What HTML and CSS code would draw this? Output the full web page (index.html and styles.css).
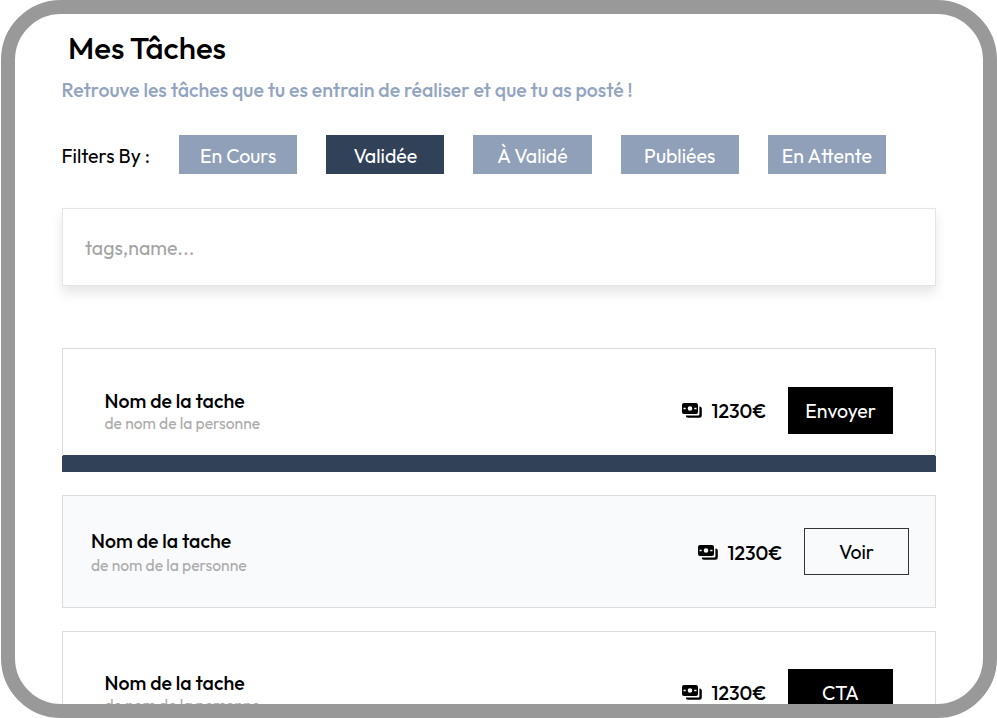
FILE: index.html
```
<!DOCTYPE html>
<html lang="fr">
<head>
<meta charset="utf-8">
<title>Mes Tâches</title>
<link rel="stylesheet" href="styles.css">
</head>
<body>
<svg class="defs" width="0" height="0" aria-hidden="true">
  <symbol id="cash" viewBox="0 0 20 15">
    <path fill-rule="evenodd" d="M2 0h12a2 2 0 0 1 2 2v7a2 2 0 0 1-2 2H2a2 2 0 0 1-2-2V2a2 2 0 0 1 2-2zM8 3.200a2.300 2.300 0 1 0 0 4.600a2.300 2.300 0 0 0 0-4.600zM1.500 4.700v1.600h2.200V4.700zM12.300 4.700v1.600h2.200V4.700z"/>
    <path d="M17.400 3.500a2.200 2.200 0 0 1 2.400 2V12.500a2.300 2.300 0 0 1-2.300 2.300H6a2.200 2.200 0 0 1-2.200-2.300H16.400a1 1 0 0 0 1-1z"/>
  </symbol>
</svg>
<main class="screen">
  <h1 class="title">Mes Tâches</h1>
  <p class="subtitle">Retrouve les tâches que tu es entrain de réaliser et que tu as posté !</p>
  <div class="filters">
    <span class="label">Filters By :</span>
    <button class="filter">En Cours</button>
    <button class="filter active">Validée</button>
    <button class="filter">À Validé</button>
    <button class="filter">Publiées</button>
    <button class="filter">En Attente</button>
  </div>
  <div class="search">tags,name...</div>
  <section class="tasks">
    <article class="task selected">
      <div class="info"><h2>Nom de la tache</h2><p>de nom de la personne</p></div>
      <div class="price"><svg class="cash"><use href="#cash"/></svg><span>1230€</span></div>
      <button class="action">Envoyer</button>
    </article>
    <article class="task muted">
      <div class="info"><h2>Nom de la tache</h2><p>de nom de la personne</p></div>
      <div class="price"><svg class="cash"><use href="#cash"/></svg><span>1230€</span></div>
      <button class="action outline">Voir</button>
    </article>
    <article class="task next">
      <div class="info"><h2>Nom de la tache</h2><p>de nom de la personne</p></div>
      <div class="price"><svg class="cash"><use href="#cash"/></svg><span>1230€</span></div>
      <button class="action">CTA</button>
    </article>
  </section>
</main>
</body>
</html>
```
FILE: styles.css
```
* { box-sizing: border-box; margin: 0; }
html, body { height: 718px; overflow: hidden; background: #fff; }
body {
  font-family: Outfit, Inter, "Liberation Sans", sans-serif;
  font-size: 19.5px;
  color: #000;
  white-space: nowrap;
}
.defs { display: block; height: 0; }
.screen {
  width: 996px;
  height: 718px;
  margin-left: 1px;
  padding: 14px 47px 0 46.5px;
  border: 14px solid #999;
  border-radius: 60px;
  overflow: hidden;
}
.title { height: 40px; margin-left: 6.5px; font-size: 31.2px; line-height: 40px; font-weight: 500; }
.subtitle { height: 26px; margin-top: 9px; font-size: 19.5px; line-height: 26px; font-weight: 500; color: #93a4c0; }
.filters { display: flex; align-items: center; gap: 29px; height: 39px; margin-top: 32px; }
.label { width: 88.5px; padding-top: 1px; }
.filter {
  width: 118.200px; height: 39px; padding: 1px 0 0; border: 0;
  font: inherit; color: #fff; background: #90a0b9;
}
.filter.active { background: #314158; }
.search {
  height: 78px; margin-top: 34px; padding-left: 22.500px;
  border: 1px solid #e5e5e5;
  box-shadow: 0 7px 11px rgba(0, 0, 0, .1);
  line-height: 78px; color: #a3a3a3;
}
.tasks { display: grid; gap: 23px; margin-top: 62px; }
.task {
  display: flex; align-items: flex-start; height: 124px;
  padding: 38px 42px 0; border: 1px solid #ddd;
}
.task.selected { border-bottom: 0; border-image: linear-gradient(#ddd 107px, #314158 107px) 1; background: linear-gradient(#314158, #314158) bottom / 100% 17px no-repeat border-box; }
.info { flex: 1; }
.info h2 { font-size: 19.5px; line-height: 27px; font-weight: 500; }
.info p { font-size: 15.600px; line-height: 18px; color: #aaa; }
.price { display: flex; align-items: center; height: 47px; margin-right: 21.5px; font-weight: 500; }
.price span { width: 55px; }
.cash { width: 20px; height: 15px; margin-right: 9.5px; }
.action {
  width: 105px; height: 47px; padding: 0; border: 1px solid #000;
  font: inherit; color: #fff; background: #000;
}
.task.muted { height: 113px; padding: 32px 26px 0 28.500px; background: #f9fafc; }
.muted .info h2 { line-height: 26px; }
.muted .info p { line-height: 22px; }
.muted .price { padding-top: 2px; }
.task.next { padding-top: 37px; }
.action.outline { color: #000; background: transparent; border-color: #333; }
```
